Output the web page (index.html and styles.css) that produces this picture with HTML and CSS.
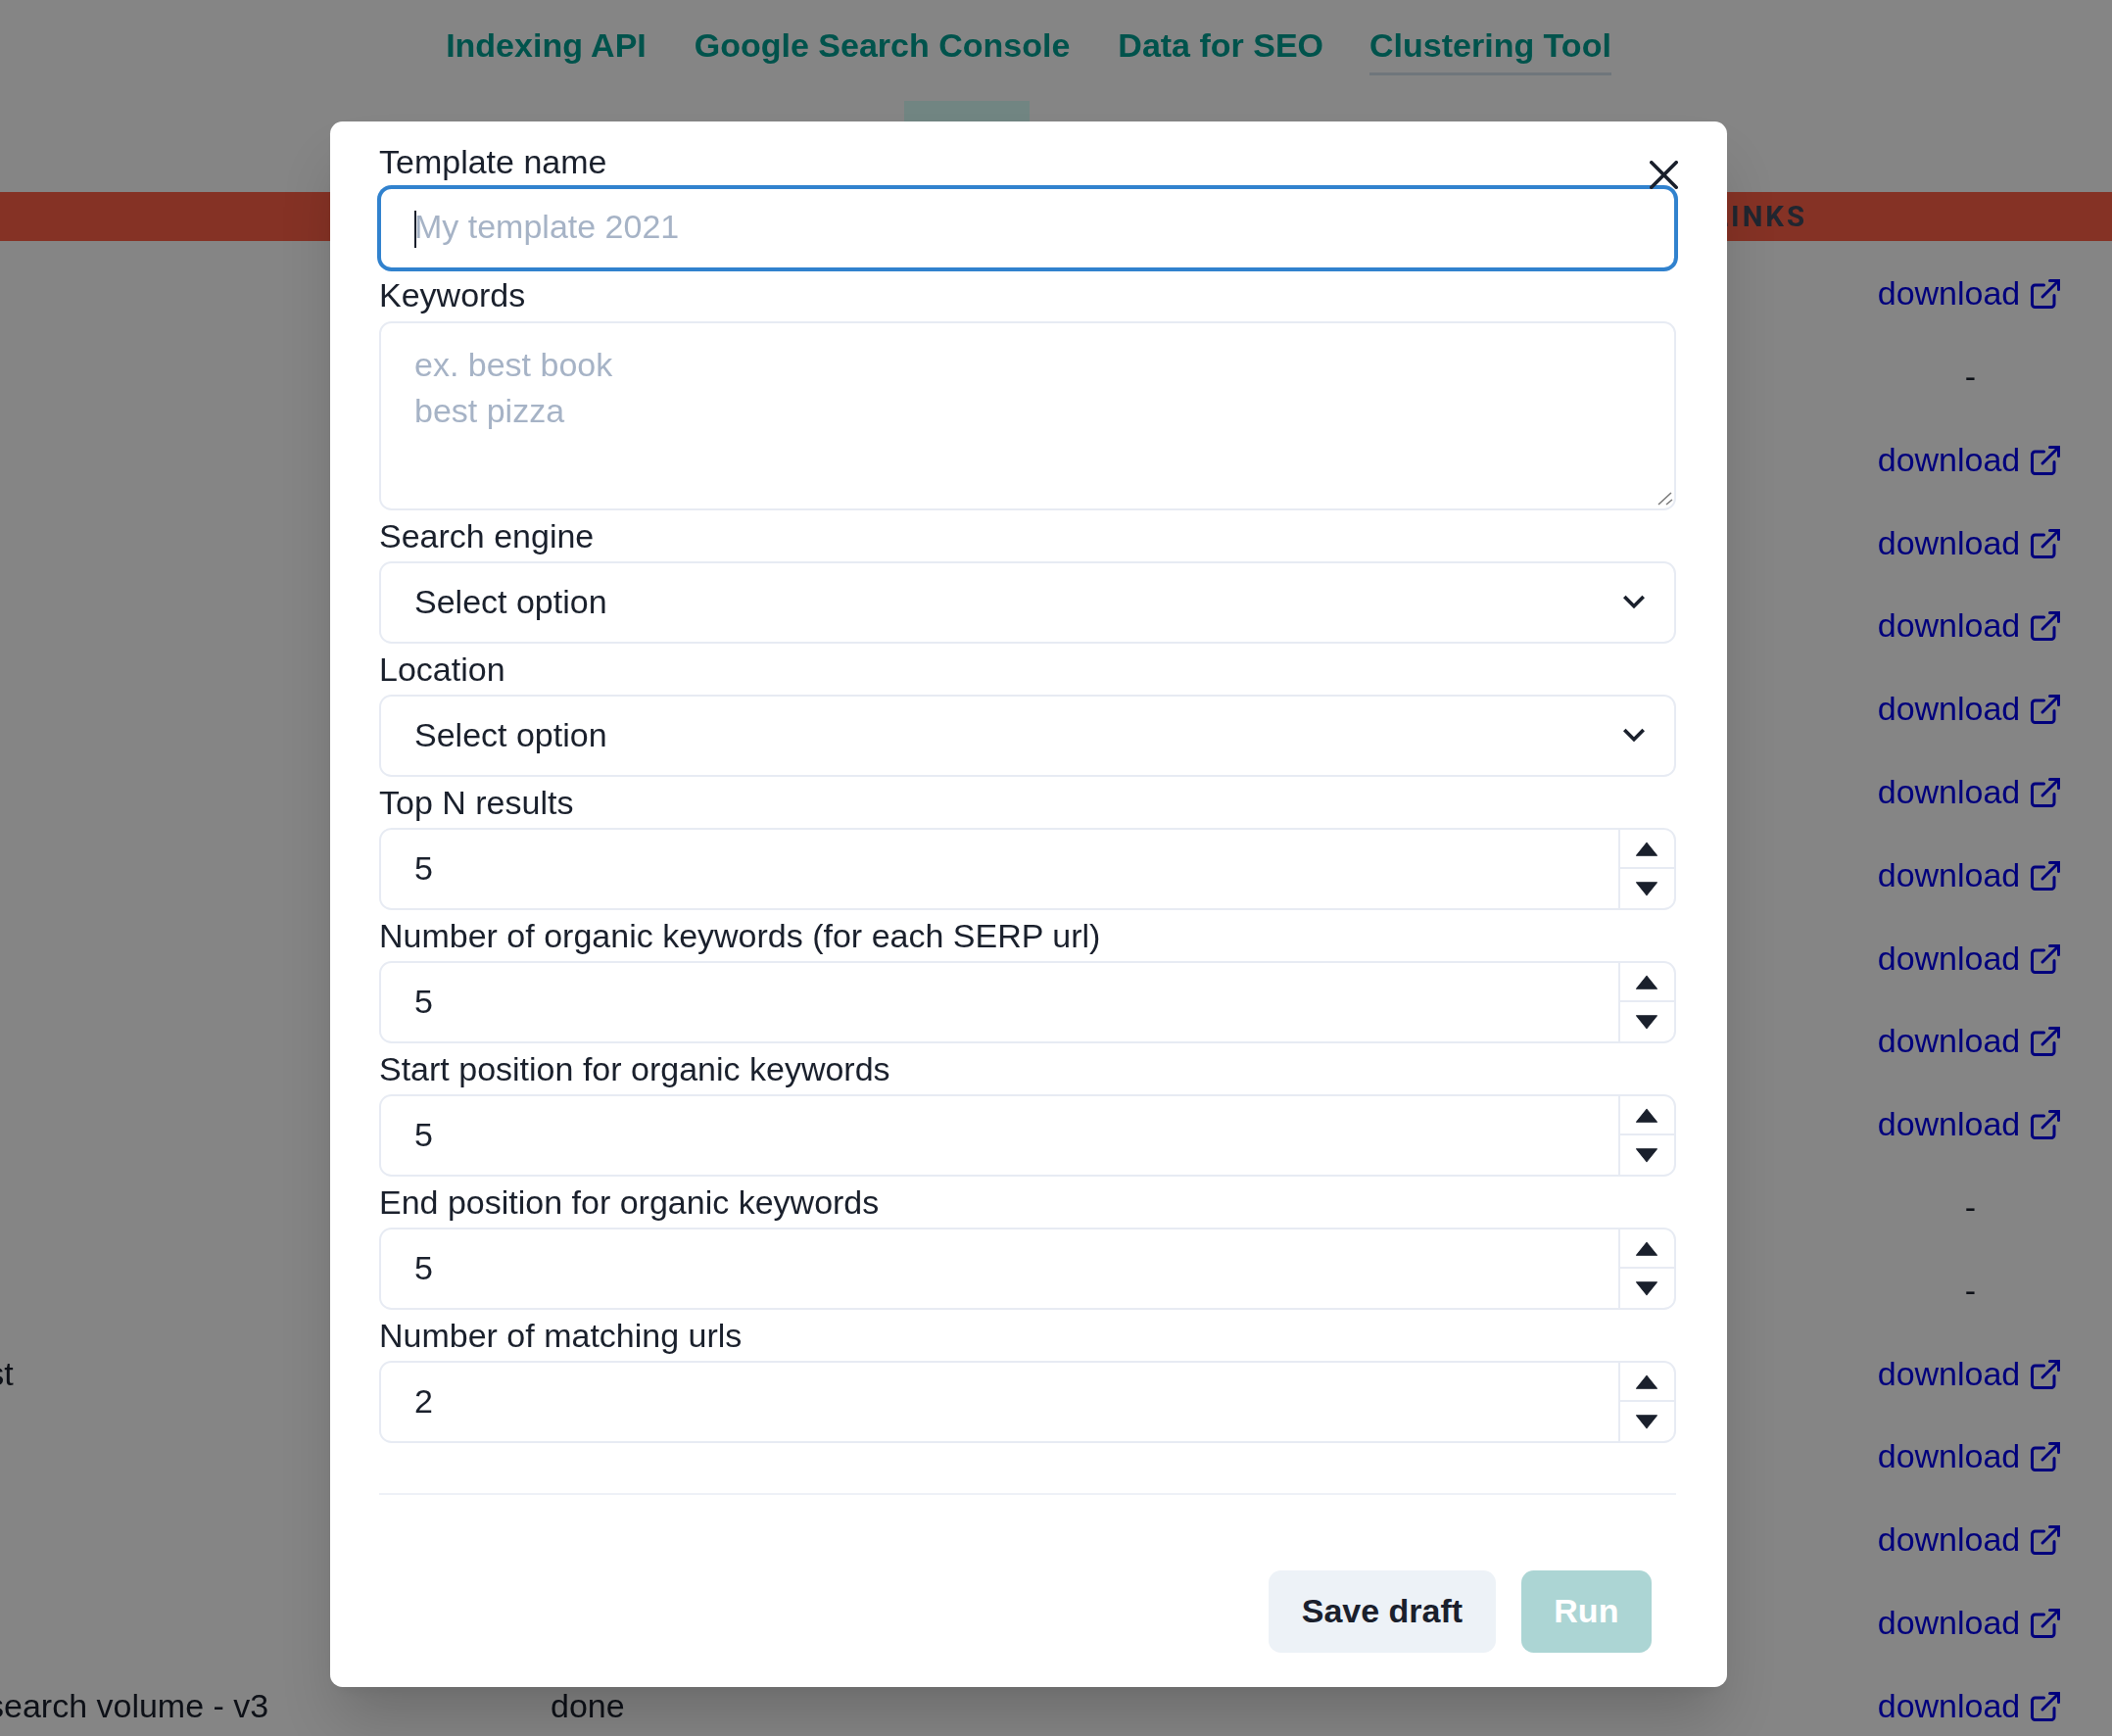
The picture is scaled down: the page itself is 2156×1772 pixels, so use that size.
FILE: index.html
```html
<!DOCTYPE html>
<html lang="en">
<head>
<meta charset="utf-8">
<title>Clustering Tool</title>
<link rel="stylesheet" href="styles.css">
</head>
<body>
<svg class="defs" width="0" height="0" aria-hidden="true">
  <symbol id="ext" viewBox="0 0 24 24"><g fill="none" stroke="currentColor" stroke-linecap="round" stroke-width="2"><path d="M18 13v6a2 2 0 0 1-2 2H5a2 2 0 0 1-2-2V8a2 2 0 0 1 2-2h6"/><path d="M15 3h6v6"/><path d="M10 14L21 3"/></g></symbol>
  <symbol id="chev" viewBox="0 0 24 24"><path fill="currentColor" d="M16.59 8.59L12 13.17 7.41 8.59 6 10l6 6 6-6z"/></symbol>
  <symbol id="up" viewBox="0 0 21 14"><path fill="currentColor" stroke="currentColor" stroke-linejoin="round" d="M10.5 1 L20.5 13.5 H0.5Z"/></symbol>
  <symbol id="down" viewBox="0 0 21 14"><path fill="currentColor" stroke="currentColor" stroke-linejoin="round" d="M0.5 .5 H20.5 L10.5 13Z"/></symbol>
</svg>

<div class="page">
  <nav class="tabs">
    <a class="tab">Indexing API</a>
    <a class="tab">Google Search Console</a>
    <a class="tab">Data for SEO</a>
    <a class="tab tab-active">Clustering Tool</a>
  </nav>
  <div class="toolbar"><span class="toolbar-btn"></span></div>
  <div class="thead"><span class="th-links">LINKS</span></div>
  <div class="tbody">
    <div class="row"><span></span><span></span><a class="dl">download <svg class="ext"><use href="#ext"/></svg></a></div>
    <div class="row"><span></span><span></span><span class="dash">-</span></div>
    <div class="row"><span></span><span></span><a class="dl">download <svg class="ext"><use href="#ext"/></svg></a></div>
    <div class="row"><span></span><span></span><a class="dl">download <svg class="ext"><use href="#ext"/></svg></a></div>
    <div class="row"><span></span><span></span><a class="dl">download <svg class="ext"><use href="#ext"/></svg></a></div>
    <div class="row"><span></span><span></span><a class="dl">download <svg class="ext"><use href="#ext"/></svg></a></div>
    <div class="row"><span></span><span></span><a class="dl">download <svg class="ext"><use href="#ext"/></svg></a></div>
    <div class="row"><span></span><span></span><a class="dl">download <svg class="ext"><use href="#ext"/></svg></a></div>
    <div class="row"><span></span><span></span><a class="dl">download <svg class="ext"><use href="#ext"/></svg></a></div>
    <div class="row"><span></span><span></span><a class="dl">download <svg class="ext"><use href="#ext"/></svg></a></div>
    <div class="row"><span></span><span></span><a class="dl">download <svg class="ext"><use href="#ext"/></svg></a></div>
    <div class="row"><span></span><span></span><span class="dash">-</span></div>
    <div class="row"><span></span><span></span><span class="dash">-</span></div>
    <div class="row"><span class="name-shift">test</span><span></span><a class="dl">download <svg class="ext"><use href="#ext"/></svg></a></div>
    <div class="row"><span></span><span></span><a class="dl">download <svg class="ext"><use href="#ext"/></svg></a></div>
    <div class="row"><span></span><span></span><a class="dl">download <svg class="ext"><use href="#ext"/></svg></a></div>
    <div class="row"><span></span><span></span><a class="dl">download <svg class="ext"><use href="#ext"/></svg></a></div>
    <div class="row"><span class="name-last">search volume - v3</span><span>done</span><a class="dl">download <svg class="ext"><use href="#ext"/></svg></a></div>
  </div>
</div>

<div class="overlay">
  <section class="modal">
    <form class="form">
      <label class="label" for="f-name">Template name</label>
      <div class="name-wrap">
        <input class="control control-focus" id="f-name" type="text" placeholder="My template 2021">
        <span class="caret"></span>
      </div>

      <label class="label label-after-name" for="f-kw">Keywords</label>
      <div class="area-wrap">
        <textarea class="control area" id="f-kw" placeholder="ex. best book&#10;best pizza"></textarea>
        <svg class="grip" viewBox="0 0 16 16"><path d="M1 14L14 2M9 14l6-5" fill="none" stroke="#777" stroke-width="1.5"/></svg>
      </div>

      <label class="label" for="f-se">Search engine</label>
      <div class="select-wrap">
        <select class="control select" id="f-se"><option>Select option</option></select>
        <svg class="chev"><use href="#chev"/></svg>
      </div>

      <label class="label" for="f-loc">Location</label>
      <div class="select-wrap">
        <select class="control select" id="f-loc"><option>Select option</option></select>
        <svg class="chev"><use href="#chev"/></svg>
      </div>

      <label class="label" for="f-top">Top N results</label>
      <div class="number">
        <input class="number-input" id="f-top" type="number" value="5">
        <div class="stepper"><span class="step step-up"><svg class="tri"><use href="#up"/></svg></span><span class="step"><svg class="tri"><use href="#down"/></svg></span></div>
      </div>

      <label class="label" for="f-org">Number of organic keywords (for each SERP url)</label>
      <div class="number">
        <input class="number-input" id="f-org" type="number" value="5">
        <div class="stepper"><span class="step step-up"><svg class="tri"><use href="#up"/></svg></span><span class="step"><svg class="tri"><use href="#down"/></svg></span></div>
      </div>

      <label class="label" for="f-start">Start position for organic keywords</label>
      <div class="number">
        <input class="number-input" id="f-start" type="number" value="5">
        <div class="stepper"><span class="step step-up"><svg class="tri"><use href="#up"/></svg></span><span class="step"><svg class="tri"><use href="#down"/></svg></span></div>
      </div>

      <label class="label" for="f-end">End position for organic keywords</label>
      <div class="number">
        <input class="number-input" id="f-end" type="number" value="5">
        <div class="stepper"><span class="step step-up"><svg class="tri"><use href="#up"/></svg></span><span class="step"><svg class="tri"><use href="#down"/></svg></span></div>
      </div>

      <label class="label" for="f-match">Number of matching urls</label>
      <div class="number">
        <input class="number-input" id="f-match" type="number" value="2">
        <div class="stepper"><span class="step step-up"><svg class="tri"><use href="#up"/></svg></span><span class="step"><svg class="tri"><use href="#down"/></svg></span></div>
      </div>

      <hr class="divider">

      <div class="footer">
        <button class="btn btn-draft" type="button">Save draft</button>
        <button class="btn btn-run" type="button">Run</button>
      </div>
    </form>
    <button class="close" type="button" aria-label="Close">
      <svg viewBox="0 0 24 24" width="29" height="29"><path fill="currentColor" d="M.439,21.44a1.5,1.5,0,0,0,2.122,2.121L11.823,14.3a.25.25,0,0,1,.354,0l9.262,9.263a1.5,1.5,0,1,0,2.122-2.121L14.3,12.177a.25.25,0,0,1,0-.354l9.263-9.262A1.5,1.5,0,0,0,21.439.44L12.177,9.7a.25.25,0,0,1-.354,0L2.561.44A1.5,1.5,0,0,0,.439,2.561L9.7,11.823a.25.25,0,0,1,0,.354Z"/></svg>
    </button>
  </section>
</div>
</body>
</html>
```

FILE: styles.css
```css
* { box-sizing: border-box; }

html, body {
  margin: 0;
  height: 100%;
  overflow: hidden;
}

body {
  background: #fff;
  color: #1a202c;
  font-family: "Liberation Sans", Arial, sans-serif;
  font-size: 34px;
  line-height: 50px;
}

.defs { position: absolute; }

/* background page */
.page {
  width: 2156px;
  filter: blur(0.7px);
}

.tabs {
  width: 2100px;
  display: flex;
  justify-content: center;
  gap: 49px;
  padding-top: 21px;
}

.tab {
  color: #00a093;
  font-weight: 700;
  height: 56px;
}

.tab-active {
  border-bottom: 3px solid #d5e2ee;
  margin-left: -2px;
}

.toolbar {
  padding: 26px 0 9px 923px;
}

.toolbar-btn {
  display: block;
  width: 128px;
  height: 84px;
  background: #d8fffa;
}

.thead {
  height: 50px;
  background: #ff6047;
  display: flex;
  justify-content: flex-end;
  align-items: center;
  padding-right: 311px;
}

.th-links {
  font-family: Roboto, "Liberation Sans", sans-serif;
  font-weight: 700;
  font-size: 29.4px;
  letter-spacing: 0.1em;
  color: #3f4a5c;
}

.tbody {
  padding-top: 10.8px;
  margin-left: -11px;
  width: 2167px;
}

.row {
  height: 84.8px;
  display: grid;
  grid-template-columns: 573px 1fr 289px;
  align-items: center;
  white-space: nowrap;
}

.name-shift {
  margin-left: -30px;
}

.name-last {
  margin-left: -2px;
}

.dl {
  color: #00e;
  display: flex;
  justify-content: center;
  align-items: center;
  gap: 8px;
}

.ext {
  width: 36px;
  height: 36px;
  margin-top: 2px;
}

.dash {
  text-align: center;
}

/* modal */
.overlay {
  position: fixed;
  inset: 0;
  background: rgba(0, 0, 0, 0.48);
  display: flex;
  justify-content: center;
  align-items: flex-start;
  padding-right: 56px;
}

.modal {
  position: relative;
  width: 1426px;
  margin-top: 124px;
  background: #fff;
  border-radius: 12.6px;
  padding: 15px 52px 35px 50px;
  box-shadow: 0 40px 60px -10px rgba(0, 0, 0, 0.18), 0 8px 13px -4px rgba(0, 0, 0, 0.05);
  filter: blur(0.7px);
}

.form {
  display: flex;
  flex-direction: column;
}

.label {
  display: block;
  height: 52px;
  line-height: 52px;
  color: #1a202c;
}

.label-after-name {
  height: 53px;
}

.control,
.number {
  width: 100%;
  height: 84px;
  border: 2px solid #e7ebf3;
  border-radius: 12.6px;
  background: #fff;
  font: inherit;
  color: #1a202c;
}

.control {
  display: block;
  padding: 0 34px 3px;
  outline: none;
}

.control-focus {
  border-color: #3182ce;
  box-shadow: 0 0 0 2px #3182ce;
}

.control::placeholder {
  color: #a6b3c6;
  opacity: 1;
}

.name-wrap,
.select-wrap,
.area-wrap {
  position: relative;
}

.caret {
  position: absolute;
  left: 36px;
  top: 24px;
  width: 2px;
  height: 38px;
  background: #1a202c;
}

.area {
  height: 193px;
  padding-top: 19px;
  line-height: 46.5px;
  resize: none;
}

.grip {
  position: absolute;
  right: 3px;
  bottom: 4px;
  width: 16px;
  height: 16px;
}

.select {
  appearance: none;
  -webkit-appearance: none;
}

.chev {
  position: absolute;
  right: 21px;
  top: 19px;
  width: 44px;
  height: 44px;
  color: #1a202c;
  pointer-events: none;
}

.number {
  display: flex;
}

.number-input {
  flex: 1;
  min-width: 0;
  border: 0;
  outline: none;
  background: transparent;
  font: inherit;
  color: inherit;
  padding: 0 0 3px 34px;
  border-radius: 12.6px;
  appearance: textfield;
  -moz-appearance: textfield;
}

.number-input::-webkit-inner-spin-button,
.number-input::-webkit-outer-spin-button {
  -webkit-appearance: none;
  margin: 0;
}

.stepper {
  width: 57px;
  height: 80px;
  border-left: 2px solid #e7ebf3;
  display: flex;
  flex-direction: column;
}

.step {
  flex: 1;
  display: flex;
  align-items: center;
  justify-content: center;
  padding-right: 2px;
}

.step-up {
  border-bottom: 2px solid #e7ebf3;
  flex: 0 0 40px;
}

.tri {
  width: 22px;
  height: 15px;
  color: #1a202c;
}

.divider {
  width: 100%;
  height: 2px;
  border: 0;
  background: #eef1f7;
  margin: 51px 0 0;
}

.footer {
  display: flex;
  justify-content: flex-end;
  gap: 26px;
  padding: 77px 25px 0 0;
}

.btn {
  height: 84px;
  padding: 0 33.6px 2px;
  border: 0;
  border-radius: 12.6px;
  font: inherit;
  font-weight: 700;
}

.btn-draft {
  background: #edf2f7;
  color: #1a202c;
}

.btn-run {
  background: #319795;
  color: #fff;
  opacity: 0.4;
}

.close {
  position: absolute;
  top: 40px;
  right: 50px;
  width: 29px;
  height: 29px;
  padding: 0;
  border: 0;
  background: none;
  color: #1a202c;
  display: flex;
}
```
